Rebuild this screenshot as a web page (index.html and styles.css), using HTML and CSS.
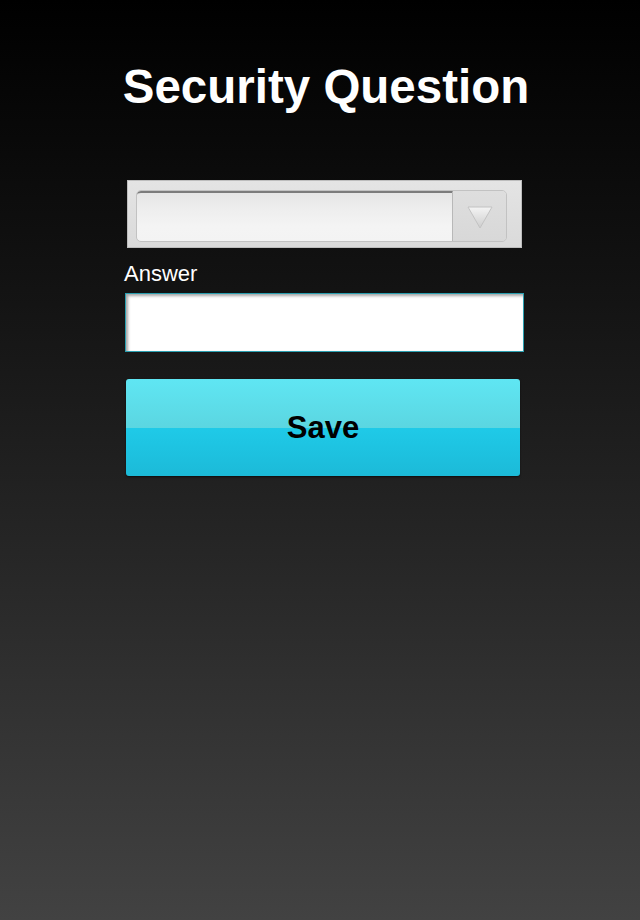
FILE: index.html
```html
<!DOCTYPE html>
<html>
<head>
<meta charset="utf-8">
<link rel="stylesheet" href="styles.css">
</head>
<body>
<div class="page">
  <h1 class="title">Security Question</h1>
  <div class="select">
    <div class="select-inner">
      <div class="select-field"></div>
      <div class="select-btn">
        <svg class="arrow" width="26" height="23" viewBox="0 0 26 23">
          <defs>
            <linearGradient id="ag" x1="0" y1="0" x2="0" y2="1">
              <stop offset="0" stop-color="#f4f4f4"/>
              <stop offset="1" stop-color="#cdcdcd"/>
            </linearGradient>
          </defs>
          <polygon points="1,1 25,1 13,22" fill="url(#ag)" stroke="#c2c2c2" stroke-width="1"/>
        </svg>
      </div>
    </div>
  </div>
  <label class="label">Answer</label>
  <div class="input"></div>
  <button class="save">Save</button>
</div>
</body>
</html>
```
FILE: styles.css
```css
html, body {
  margin: 0;
  padding: 0;
}
body {
  width: 640px;
  height: 920px;
  background: linear-gradient(to bottom, #000000 0%, #121212 30%, #262626 60%, #424242 100%);
  font-family: "Liberation Sans", Arial, sans-serif;
  overflow: hidden;
}
.page {
  width: 399px;
  margin-left: 125px;
  padding-top: 59px;
  display: flex;
  flex-direction: column;
}
.title {
  margin: 0 -30px;
  padding-left: 3px;
  font-size: 47.5px;
  line-height: 56px;
  font-weight: bold;
  color: #fff;
  text-align: center;
  white-space: nowrap;
}
.select {
  margin-top: 65px;
  margin-left: 2px;
  width: 395px;
  height: 68px;
  box-sizing: border-box;
  background: linear-gradient(to bottom, #e4e4e4 0%, #dadada 100%);
  border: 1px solid #bdbdbd;
  padding: 9px 14px 6px 8px;
}
.select-inner {
  display: flex;
  height: 52px;
  border-radius: 5px;
  border: 1px solid #c2c2c2;
  overflow: hidden;
  box-sizing: border-box;
}
.select-field {
  flex: 1;
  background: linear-gradient(to bottom, #e6e6e6 0%, #efefef 40%, #f4f4f4 70%, #f3f3f3 100%);
  border-top: 2px solid #7c7c7c;
  border-right: 1px solid #b8b8b8;
  border-radius: 4px 0 0 4px;
}
.select-btn {
  width: 53px;
  background: linear-gradient(to bottom, #dedede 0%, #d8d8d8 100%);
  display: flex;
  align-items: center;
  justify-content: center;
}
.arrow {
  display: block;
  margin-top: 2px;
}
.label {
  margin-top: 13px;
  margin-left: -1px;
  font-size: 22px;
  line-height: 26px;
  color: #fff;
}
.input {
  margin-top: 6px;
  width: 399px;
  height: 59px;
  box-sizing: border-box;
  background: #fff;
  border: 1px solid #2a9fb0;
  box-shadow: inset 2px 2px 3px rgba(0,0,0,0.35);
}
.save {
  margin-top: 27px;
  margin-left: 1px;
  width: 394px;
  height: 97px;
  border: none;
  border-radius: 3px;
  background: linear-gradient(to bottom, #5fe6f3 0%, #5bd6e1 50%, #1fcae8 50%, #1cbad8 100%);
  font-family: "Liberation Sans", Arial, sans-serif;
  font-size: 31px;
  font-weight: bold;
  color: #000;
  padding: 0 0 0 0;
  line-height: 97px;
  box-shadow: 0 1px 2px rgba(0,0,0,0.6);
}
```
